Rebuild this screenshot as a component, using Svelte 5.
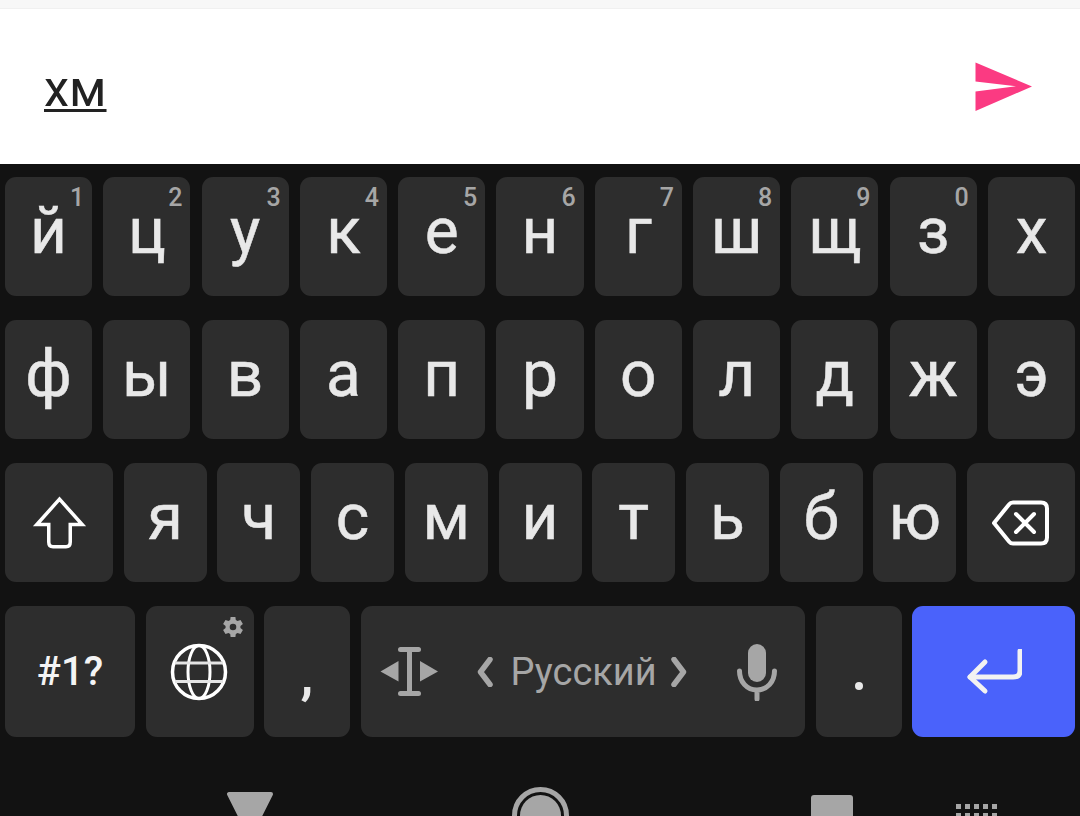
<script>
	const row1 = [
		['й', '1'], ['ц', '2'], ['у', '3'], ['к', '4'], ['е', '5'], ['н', '6'],
		['г', '7'], ['ш', '8'], ['щ', '9'], ['з', '0'], ['х', '']
	];
	const row2 = ['ф', 'ы', 'в', 'а', 'п', 'р', 'о', 'л', 'д', 'ж', 'э'];
	const row3 = ['я', 'ч', 'с', 'м', 'и', 'т', 'ь', 'б', 'ю'];
</script>

<div class="page">
	<div class="topbar"></div>
	<div class="composer">
		<span class="draft">хм</span>
		<svg class="send" width="58" height="50" viewBox="0 0 58 50">
			<polygon points="0.5,0.5 57,24.5 0.5,49 0.5,29.5 41,24.2 0.5,19.5" fill="#fb3a82" />
		</svg>
	</div>

	<div class="keyboard">
		<div class="row">
			{#each row1 as [ch, hint]}
				<div class="key">
					<span class="letter">{ch}</span>
					{#if hint}<span class="hint">{hint}</span>{/if}
				</div>
			{/each}
		</div>

		<div class="row">
			{#each row2 as ch}
				<div class="key"><span class="letter">{ch}</span></div>
			{/each}
		</div>

		<div class="row row3">
			<div class="key wide">
				<svg width="56" height="56" viewBox="0 0 56 56" fill="none" stroke="#fff" stroke-width="3.5">
					<path d="M28.5 4.2 L5.8 29.5 H17.75 V47 Q17.75 51.75 22 51.75 H35 Q39.25 51.75 39.25 47 V29.5 H51.2 Z" />
				</svg>
			</div>
			{#each row3 as ch}
				<div class="key"><span class="letter">{ch}</span></div>
			{/each}
			<div class="key wide">
				<svg width="60" height="48" viewBox="0 0 60 48" fill="none" stroke="#fff" stroke-width="4" stroke-linejoin="round" stroke-linecap="round">
					<path d="M3 24 L18 5.5 Q19.5 3.5 22 3.5 H50 Q56 3.5 56 9.5 V38.5 Q56 44.5 50 44.5 H22 Q19.5 44.5 18 42.5 Z" />
					<path d="M25 15 L43 33 M43 15 L25 33" />
				</svg>
			</div>
		</div>

		<div class="row bottom">
			<div class="key symbols">#1?</div>
			<div class="key globe">
				<svg class="globe-icon" width="58" height="58" viewBox="0 0 58 58" fill="none" stroke="#fff" stroke-width="3.5">
					<circle cx="29" cy="29" r="26.5" />
					<ellipse cx="29" cy="29" rx="11" ry="26.5" stroke-width="3" />
					<path d="M5 20 H53 M5 38.5 H53" stroke-width="3" stroke="#e4e4e4" />
				</svg>
				<svg class="gear" width="24" height="24" viewBox="0 0 24 24">
					<path
						fill="#a6a6a6"
						d="M19.4 13a7.6 7.6 0 0 0 0-2l2.5-1.9-2.4-4.2-3 1.2a7.6 7.6 0 0 0-1.7-1L14.4 1.9H9.6L9.2 5.1a7.6 7.6 0 0 0-1.7 1l-3-1.2-2.4 4.2L4.6 11a7.6 7.6 0 0 0 0 2l-2.5 1.9 2.4 4.2 3-1.2a7.6 7.6 0 0 0 1.7 1l.4 3.2h4.8l.4-3.2a7.6 7.6 0 0 0 1.7-1l3 1.2 2.4-4.2zM12 15.3a3.3 3.3 0 1 1 0-6.6 3.3 3.3 0 0 1 0 6.6z"
					/>
				</svg>
			</div>
			<div class="key punct"><span class="mark comma">,</span></div>
			<div class="key space">
				<svg class="cursor" width="58" height="52" viewBox="0 0 58 52" fill="#a6a6a6">
					<polygon points="0.5,25.5 18.5,15 18.5,35.5" />
					<polygon points="40,15 40,35.5 58,25.5" />
					<rect x="18" y="1" width="23" height="5" rx="2.5" />
					<rect x="18" y="45" width="23" height="5" rx="2.5" />
					<rect x="27" y="2" width="5" height="47" />
				</svg>
				<svg class="chev-l" width="16" height="30" viewBox="0 0 16 30" fill="none" stroke="#a6a6a6" stroke-width="5.5" stroke-linecap="round" stroke-linejoin="round">
					<path d="M13 2.5 L3.5 15 L13 27.5" />
				</svg>
				<span class="lang">Русский</span>
				<svg class="chev-r" width="16" height="30" viewBox="0 0 16 30" fill="none" stroke="#a6a6a6" stroke-width="5.5" stroke-linecap="round" stroke-linejoin="round">
					<path d="M3 2.5 L12.5 15 L3 27.5" />
				</svg>
				<svg class="mic" width="40" height="57" viewBox="0 0 40 57" fill="none">
					<rect x="11" y="0" width="18" height="38" rx="9" fill="#a6a6a6" />
					<path d="M2.5 27 C2.5 38 10 46 20 46 C30 46 37.5 38 37.5 27 M20 46 V55" stroke="#a6a6a6" stroke-width="5" stroke-linecap="round" />
				</svg>
			</div>
			<div class="key punct"><span class="mark dot"></span></div>
			<div class="key enter">
				<svg width="56" height="46" viewBox="0 0 56 46" fill="none" stroke="#f2f2f2" stroke-width="5" stroke-linecap="round" stroke-linejoin="round">
					<path d="M54 2 V22 Q54 28 47 28 H4" />
					<path d="M19 13 L4 28 L19 42" />
				</svg>
			</div>
		</div>

		<div class="navbar">
			<svg class="nav-back" width="48" height="48" viewBox="0 0 48 48">
				<polygon points="3,3 45,3 24,45" fill="#a6a6a6" stroke="#a6a6a6" stroke-width="4" stroke-linejoin="round" />
			</svg>
			<div class="nav-home"><div></div></div>
			<div class="nav-recent"></div>
			<div class="nav-grid">
				{#each Array(10) as _}<i></i>{/each}
			</div>
		</div>
	</div>
</div>

<style>
	:global(body) {
		margin: 0;
		background: #121212;
	}

	.page {
		width: 1080px;
		height: 816px;
		overflow: hidden;
		font-family: Roboto, 'Noto Sans', sans-serif;
	}

	.topbar {
		height: 9px;
		background: #f7f7f7;
		border-bottom: 1px solid #f0f0f0;
		box-sizing: border-box;
	}

	.composer {
		height: 155px;
		background: #fff;
		display: flex;
		align-items: center;
		justify-content: space-between;
		padding: 0 47px 0 44px;
	}

	.draft {
		font-size: 50.5px;
		line-height: 60px;
		color: #222;
		text-decoration: underline;
		text-decoration-thickness: 2.5px;
		text-underline-offset: 3px;
		margin-top: 4px;
	}

	.keyboard {
		background: #121212;
		padding: 13px 5px 0;
		display: flex;
		flex-direction: column;
		gap: 24px;
	}

	.row {
		display: flex;
		flex: none;
		gap: 11.2px;
		height: 119px;
	}

	.row3 {
		gap: 10.7px;
	}

	.bottom {
		height: 131px;
		gap: 10.5px;
	}

	.key {
		position: relative;
		flex: 1 1 0;
		min-width: 0;
		background: #2d2d2d;
		border-radius: 11px;
		display: flex;
		align-items: center;
		justify-content: center;
		color: #e8e8e8;
	}

	.letter {
		font-size: 64px;
		line-height: 1;
		margin-top: -10px;
		-webkit-text-stroke: 0.5px #e8e8e8;
	}

	.hint {
		position: absolute;
		top: 7px;
		right: 8px;
		font-size: 25px;
		font-weight: 500;
		line-height: 28px;
		color: #a6a6a6;
	}

	.wide {
		flex: 0 0 108px;
	}

	.symbols {
		flex: 0 0 130px;
		font-size: 40px;
		font-weight: 500;
		color: #f4f4f4;
	}

	.globe {
		flex: 0 0 108px;
	}

	.globe-icon {
		margin-left: -1px;
	}

	.gear {
		position: absolute;
		top: 9px;
		right: 9px;
	}

	.punct {
		flex: 0 0 86px;
	}

	.mark.comma {
		font-size: 52px;
		font-weight: 700;
		line-height: 1;
		margin-top: 8px;
	}

	.mark.dot {
		width: 8px;
		height: 8px;
		border-radius: 50%;
		background: #e8e8e8;
		margin-top: 29px;
	}

	.space {
		flex: 0 0 444.5px;
		justify-content: flex-start;
		padding-left: 19px;
		box-sizing: border-box;
	}

	.chev-l {
		margin-left: 39px;
	}

	.lang {
		margin-left: 18px;
		font-size: 38px;
		color: #a6a6a6;
	}

	.chev-r {
		margin-left: 14px;
	}

	.mic {
		margin-left: 50px;
		margin-top: 2px;
	}

	.enter {
		flex: 1 1 0;
		background: #4a62fb;
	}

	.navbar {
		display: flex;
		flex: none;
		align-items: flex-start;
		padding-left: 221px;
		height: 60px;
		margin-top: 26px;
	}

	.nav-back {
		flex: none;
		margin-top: 4px;
	}

	.nav-home {
		box-sizing: border-box;
		flex: none;
		width: 57px;
		height: 57px;
		margin-left: 238px;
		border: 5px solid #a6a6a6;
		border-radius: 50%;
		padding: 3px;
	}

	.nav-home div {
		height: 100%;
		border-radius: 50%;
		background: #a6a6a6;
	}

	.nav-recent {
		width: 42px;
		height: 42px;
		margin-top: 8px;
		margin-left: 242px;
		border-radius: 3px;
		background: #a6a6a6;
	}

	.nav-grid {
		display: grid;
		grid-template-columns: repeat(5, 5px);
		gap: 4px;
		margin-top: 17px;
		margin-left: 103px;
	}

	.nav-grid i {
		height: 5px;
		background: #a6a6a6;
	}
</style>
